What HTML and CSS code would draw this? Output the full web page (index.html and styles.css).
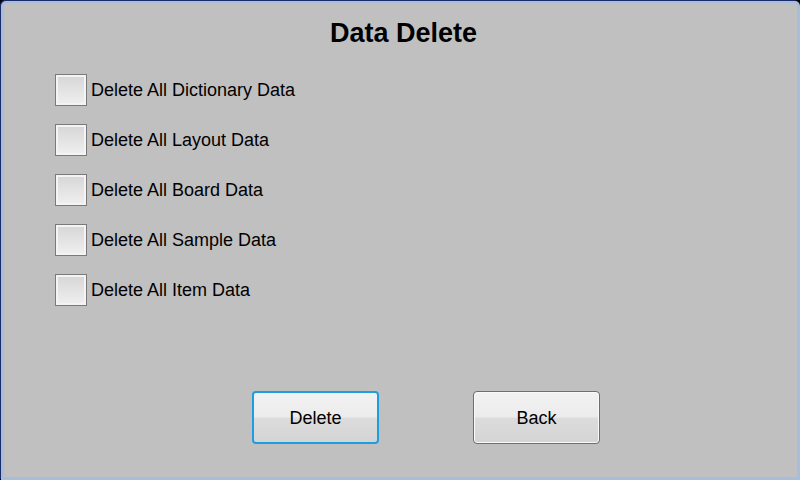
FILE: index.html
```html
<!DOCTYPE html>
<html>
<head>
    <meta charset="UTF-8">
    <title>Data Delete</title>
    <link rel="stylesheet" href="styles.css">
</head>
<body>

    <div class="l-window">
        <h1 class="title">Data Delete</h1>

        <form class="options" id="form">
            <label class="option"><span class="check"></span><span class="option__text">Delete All Dictionary Data</span></label>
            <label class="option"><span class="check"></span><span class="option__text">Delete All Layout Data</span></label>
            <label class="option"><span class="check"></span><span class="option__text">Delete All Board Data</span></label>
            <label class="option"><span class="check"></span><span class="option__text">Delete All Sample Data</span></label>
            <label class="option"><span class="check"></span><span class="option__text">Delete All Item Data</span></label>
        </form>

        <div class="actions">
            <button class="btn btn--focus">Delete</button>
            <button class="btn">Back</button>
        </div>
    </div>

</body>
</html>
```

FILE: styles.css
```css
HTML, BODY {
    margin: 0;
    height: 100%;
    }
BODY {
    font: 18px/1.2 "Liberation Sans", Arial, sans-serif;
    color: #000;
    background: #000;
    }
.l-window {
    box-sizing: border-box;
    display: flex;
    flex-direction: column;
    height: 479px;
    width: 799px;
    border: 3px solid #a7bedb;
    border-top-width: 2px;
    border-radius: 5px 5px 0 0;
    background: #c0c0c0;
    box-shadow: -1px -1px 0 #1c2a6a;
    margin: 1px 0 0 1px;
    }
.title {
    margin: 15px 0 0;
    text-align: center;
    font-size: 27px;
    font-weight: bold;
    line-height: 30px;
    padding-left: 6px;
    }
.options {
    display: flex;
    flex-direction: column;
    gap: 18px;
    margin: 26px 0 0 51px;
    }
.option {
    display: flex;
    align-items: center;
    height: 32px;
    gap: 4px;
    }
.option__text {
    padding-top: 2px;
    }
.check {
    box-sizing: border-box;
    width: 32px;
    height: 32px;
    border: 1px solid #7a7a7a;
    box-shadow: inset 0 0 0 2px #f4f4f4;
    background: linear-gradient(#d6d6d6, #f0f0f0);
    }
.actions {
    display: flex;
    gap: 94px;
    margin: 85px 0 0 248px;
    }
.btn {
    width: 127px;
    height: 53px;
    padding-top: 3px;
    border: 1px solid #6e6e6e;
    border-radius: 4px;
    background: linear-gradient(#f2f2f2 0, #ececec 48%, #dcdcdc 52%, #d4d4d4 100%);
    box-shadow: inset 0 0 0 1px #fafafa;
    font: inherit;
    color: #000;
    }
.btn--focus {
    border: 2px solid #1e9de0;
    box-shadow: none;
    }
```
